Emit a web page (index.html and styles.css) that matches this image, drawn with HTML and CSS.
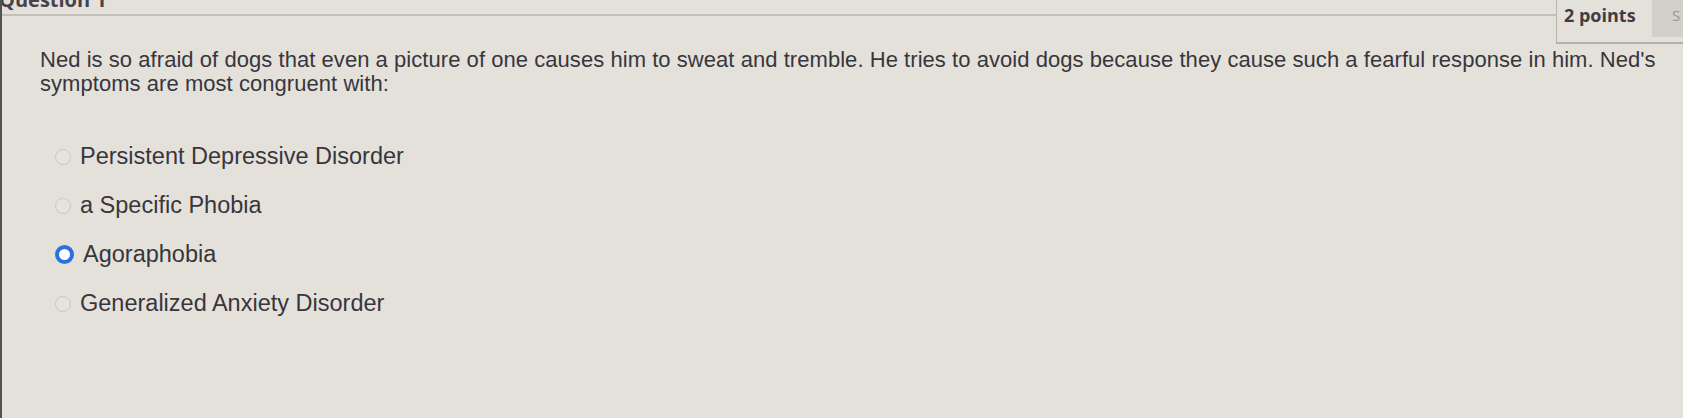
FILE: index.html
```html
<!DOCTYPE html>
<html lang="en">
<head>
<meta charset="utf-8">
<title>Question 1</title>
<link rel="stylesheet" href="styles.css">
</head>
<body>
<div class="page">
  <header class="q-header">
    <div class="title-area"><h2 class="q-title">Question 1</h2></div>
    <div class="points-box">
      <span class="points">2 points</span>
      <span class="save">S</span>
    </div>
  </header>
  <p class="q-text">Ned is so afraid of dogs that even a picture of one causes him to sweat and tremble. He tries to avoid dogs because they cause such a fearful response in him. Ned's symptoms are most congruent with:</p>
  <ul class="answers">
    <li class="answer"><span class="radio"></span><span class="label">Persistent Depressive Disorder</span></li>
    <li class="answer"><span class="radio"></span><span class="label">a Specific Phobia</span></li>
    <li class="answer"><span class="radio checked"></span><span class="label">Agoraphobia</span></li>
    <li class="answer"><span class="radio"></span><span class="label">Generalized Anxiety Disorder</span></li>
  </ul>
</div>
</body>
</html>
```
FILE: styles.css
```css
html, body {
  margin: 0;
  padding: 0;
  height: 100%;
  background: #e4e1db;
}
body {
  font-family: "Liberation Sans", Arial, sans-serif;
  color: #38363c;
  overflow: hidden;
}
.page {
  height: 100%;
  border-left: 2px solid #55524d;
  box-sizing: border-box;
}
.q-header {
  display: flex;
  height: 44px;
}
.title-area {
  flex: 1;
  height: 14px;
  border-bottom: 2px solid #c3c0ba;
  overflow: hidden;
}
.q-title {
  margin: -13px 0 0 -3px;
  font-family: "Open Sans", sans-serif;
  font-weight: 700;
  font-size: 20px;
  line-height: 26px;
  color: #46444a;
}
.points-box {
  width: 126px;
  border-left: 1px solid #b9b6b0;
  border-bottom: 2px solid #b4b1ab;
  display: flex;
  align-items: flex-start;
}
.points {
  font-family: "Open Sans", sans-serif;
  font-weight: 700;
  font-size: 18px;
  line-height: 30px;
  padding-left: 7px;
  flex: 1;
  color: #3f3d42;
}
.save {
  width: 31px;
  height: 37px;
  background: #d3d0ca;
  color: #9a978f;
  font-family: "Open Sans", sans-serif;
  font-size: 15px;
  line-height: 30px;
  padding-left: 20px;
  box-sizing: border-box;
  overflow: hidden;
}
.q-text {
  margin: 4px 0 0 0;
  padding: 0 4px 0 38px;
  font-size: 22px;
  letter-spacing: 0.05px;
  line-height: 24px;
}
.answers {
  list-style: none;
  margin: 47px 0 0 0;
  padding: 0 0 0 53px;
  display: flex;
  flex-direction: column;
  gap: 22px;
}
.answer {
  display: flex;
  align-items: center;
  gap: 9px;
  height: 27px;
}
.radio {
  width: 14px;
  height: 14px;
  border-radius: 50%;
  border: 1.5px solid #cbc8c2;
  background: #e6e3de;
  flex: none;
}
.radio.checked {
  width: 11px;
  height: 11px;
  border: 4px solid #2d6fe0;
  background: #ffffff;
}
.label {
  font-size: 23.5px;
  line-height: 27px;
}
```
